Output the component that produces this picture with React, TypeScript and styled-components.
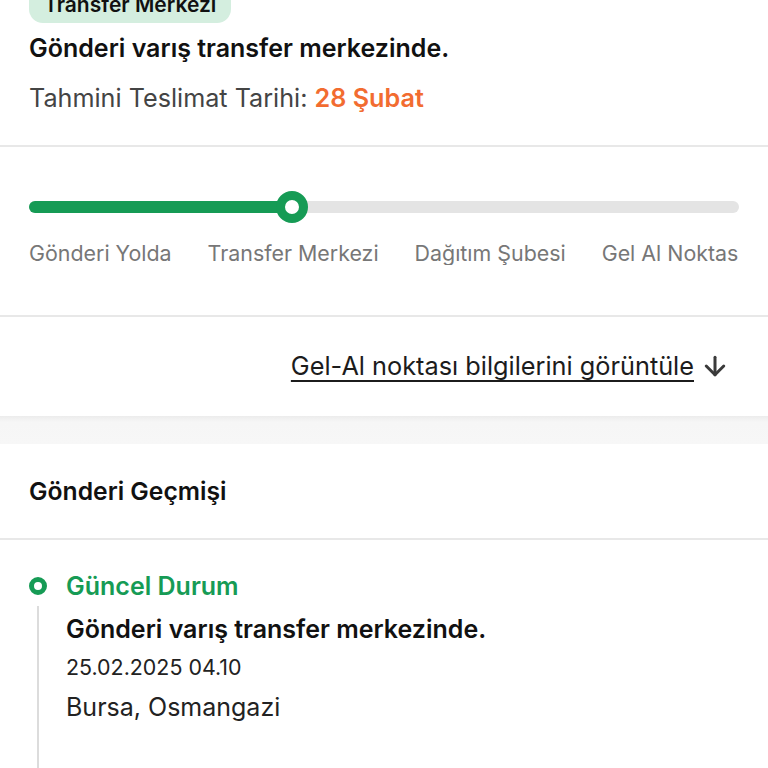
import styled, { createGlobalStyle } from 'styled-components';
import { ArrowDown } from 'lucide-react';

const GREEN = '#169b55';

const GlobalStyle = createGlobalStyle`
  html, body {
    margin: 0;
    padding: 0;
    background: #ffffff;
    overflow: hidden;
  }
  body {
    font-family: Inter, "Noto Sans", "Liberation Sans", sans-serif;
    color: #111;
  }
`;

const steps = ['Gönderi Yolda', 'Transfer Merkezi', 'Dağıtım Şubesi', 'Gel Al Noktası'];
const progress = 263 / 710;

const App = () => {
  return (
    <Page>
      <GlobalStyle />
      <Summary>
        <Badge>Transfer Merkezi</Badge>
        <StatusTitle>Gönderi varış transfer merkezinde.</StatusTitle>
        <EtaLine>
          Tahmini Teslimat Tarihi: <EtaDate>28 Şubat</EtaDate>
        </EtaLine>
      </Summary>

      <ProgressSection>
        <Track>
          <Fill style={{ width: `${progress * 100}%` }} />
          <Knob style={{ left: `${progress * 100}%` }} />
        </Track>
        <StepLabels>
          {steps.map(s => (
            <StepLabel key={s}>{s}</StepLabel>
          ))}
        </StepLabels>
      </ProgressSection>

      <LinkSection>
        <PickupLink href="#">Gel-Al noktası bilgilerini görüntüle</PickupLink>
        <ArrowDown size={30} strokeWidth={2.4} color="#3a3a3a" />
      </LinkSection>

      <Band />

      <HistoryHeader>Gönderi Geçmişi</HistoryHeader>

      <TimelineItem>
        <Marker>
          <Dot />
          <Rail />
        </Marker>
        <EventBody>
          <EventState>Güncel Durum</EventState>
          <EventTitle>Gönderi varış transfer merkezinde.</EventTitle>
          <EventDate>25.02.2025 04.10</EventDate>
          <EventPlace>Bursa, Osmangazi</EventPlace>
        </EventBody>
      </TimelineItem>
    </Page>
  );
};

const Page = styled.div`
  width: 768px;
  height: 768px;
  overflow: hidden;
  background: #fff;
`;

const Summary = styled.section`
  display: flex;
  flex-direction: column;
  align-items: flex-start;
  padding: 0 29px 32px;
  margin-top: -15px;
  border-bottom: 2px solid #e8e8e8;
`;

const Badge = styled.span`
  display: inline-flex;
  align-items: center;
  height: 38px;
  padding: 0 15px;
  border-radius: 14px;
  background: #d4eedf;
  font-size: 21px;
  font-weight: 600;
  color: #111;
`;

const StatusTitle = styled.h1`
  margin: 10px 0 0;
  font-size: 25px;
  line-height: 30px;
  font-weight: 600;
  color: #111;
`;

const EtaLine = styled.p`
  margin: 20px 0 0;
  font-size: 25.2px;
  line-height: 30px;
  color: #444;
`;

const EtaDate = styled.span`
  color: #f26c30;
  font-weight: 600;
`;

const ProgressSection = styled.section`
  padding: 54px 29px 50px;
  border-bottom: 2px solid #e8e8e8;
`;

const Track = styled.div`
  position: relative;
  height: 12px;
  border-radius: 6px;
  background: #e4e4e4;
`;

const Fill = styled.div`
  height: 100%;
  border-radius: 6px;
  background: ${GREEN};
`;

const Knob = styled.div`
  position: absolute;
  top: 50%;
  width: 32px;
  height: 32px;
  box-sizing: border-box;
  border-radius: 50%;
  border: 9px solid ${GREEN};
  background: #fff;
  transform: translate(-50%, -50%);
`;

const StepLabels = styled.div`
  display: flex;
  gap: 36px;
  margin-top: 28px;
  overflow: hidden;
  white-space: nowrap;
`;

const StepLabel = styled.span`
  flex: none;
  font-size: 21.4px;
  line-height: 24px;
  color: #777;
`;

const LinkSection = styled.section`
  display: flex;
  align-items: center;
  justify-content: flex-end;
  gap: 6px;
  padding: 34px 38px 35px 29px;
  height: 30px;
`;

const PickupLink = styled.a`
  font-size: 25.3px;
  line-height: 30px;
  color: #1c1c1c;
  text-decoration: underline;
  text-underline-offset: 5px;
  text-decoration-thickness: 2px;
`;

const Band = styled.div`
  height: 28px;
  background: linear-gradient(to bottom, #ececec 0, #f6f6f6 6px, #f7f7f7 100%);
`;

const HistoryHeader = styled.h2`
  margin: 0;
  padding: 32px 29px;
  font-size: 24.7px;
  line-height: 30px;
  font-weight: 600;
  color: #111;
  border-bottom: 2px solid #e8e8e8;
`;

const TimelineItem = styled.div`
  display: grid;
  grid-template-columns: 37px 1fr;
  padding: 0 29px;
  min-height: 240px;
`;

const Marker = styled.div`
  display: flex;
  flex-direction: column;
  align-items: center;
  width: 18px;
  padding-top: 37px;
`;

const Dot = styled.div`
  width: 18px;
  height: 18px;
  box-sizing: border-box;
  border-radius: 50%;
  border: 5px solid ${GREEN};
  background: #fff;
`;

const Rail = styled.div`
  flex: 1;
  width: 2px;
  margin-top: 11px;
  background: #dcdcdc;
`;

const EventBody = styled.div`
  display: flex;
  flex-direction: column;
  padding-top: 31px;
`;

const EventState = styled.div`
  font-size: 25px;
  line-height: 30px;
  font-weight: 600;
  color: ${GREEN};
`;

const EventTitle = styled.div`
  margin-top: 13px;
  font-size: 25px;
  line-height: 30px;
  font-weight: 600;
  color: #111;
`;

const EventDate = styled.div`
  margin-top: 9px;
  font-size: 21.4px;
  line-height: 28px;
  color: #222;
`;

const EventPlace = styled.div`
  margin-top: 11px;
  font-size: 25px;
  line-height: 30px;
  color: #222;
`;

export default App;
